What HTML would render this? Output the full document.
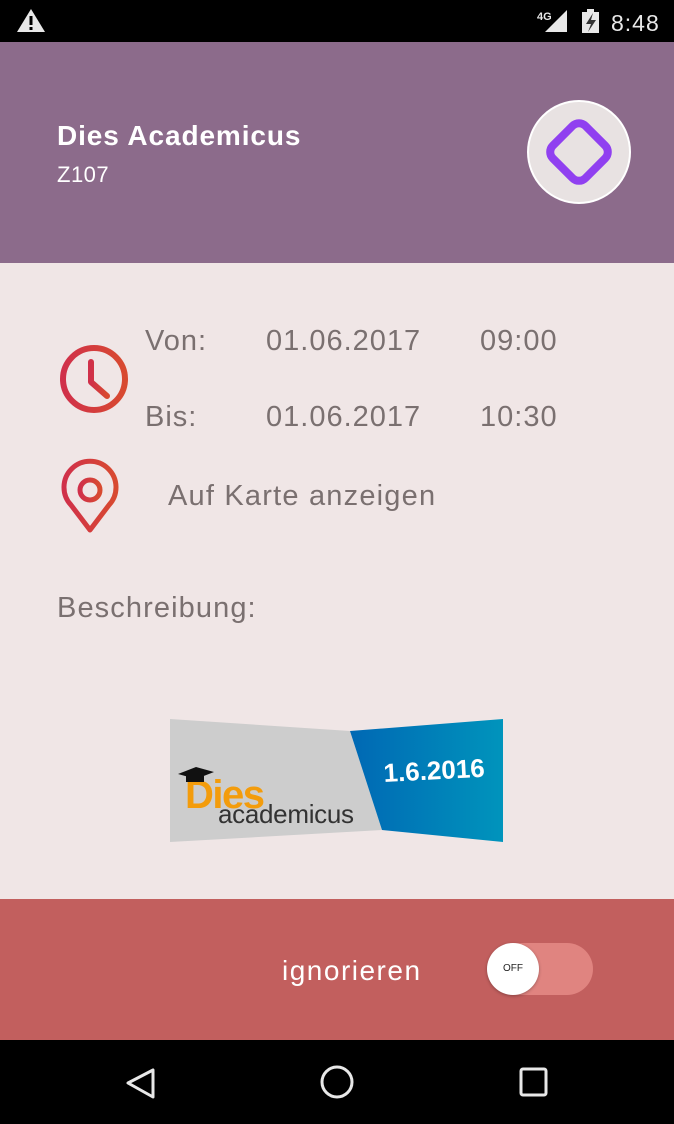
<!DOCTYPE html>
<html><head><meta charset="utf-8">
<style>
*{margin:0;padding:0;box-sizing:border-box}
body{width:674px;height:1124px;overflow:hidden;background:#f0e6e6;font-family:"Liberation Sans",Roboto,sans-serif;position:relative}
.abs{position:absolute}
.t{color:#7a7070;font-size:29px;position:absolute;white-space:nowrap;letter-spacing:1px}
</style></head><body>
<div class="abs" style="left:0;top:0;width:674px;height:42px;background:#000"></div>
<svg class="abs" style="left:0;top:0" width="674" height="42">
<path d="M31 9 L45 32 L17 32 Z" fill="#e8e8e8"/>
<rect x="29.5" y="16" width="3" height="9" fill="#000"/><rect x="29.5" y="27" width="3" height="3" fill="#000"/>
<text x="537" y="20" fill="#e8e8e8" font-size="11" font-weight="bold" font-family="Liberation Sans">4G</text>
<path d="M567 10 L567 32 L545 32 Z" fill="#e8e8e8"/>
<rect x="582" y="12" width="17" height="21" fill="#e8e8e8"/><rect x="587" y="9" width="7" height="4" fill="#e8e8e8"/>
<path d="M593 13 L586 24 L591 24 L588 32 L596 20 L591 20 Z" fill="#333"/>
<text x="611" y="31" fill="#e8e8e8" font-size="23" letter-spacing="1" font-family="Liberation Sans">8:48</text>
</svg>
<div class="abs" style="left:0;top:42px;width:674px;height:221px;background:#8c6b8b"></div>
<div class="abs" style="left:57px;top:120px;color:#fff;font-size:28px;font-weight:bold;letter-spacing:0.9px">Dies Academicus</div>
<div class="abs" style="left:57px;top:162px;color:#fff;font-size:22px;letter-spacing:0.5px">Z107</div>
<svg class="abs" style="left:520px;top:93px" width="120" height="120">
<circle cx="59" cy="59" r="51" fill="#e8e2e2" stroke="#fff" stroke-width="2"/>
<rect x="36" y="36" width="46" height="46" rx="9" transform="rotate(45 59 59)" fill="none" stroke="#9040f0" stroke-width="8"/>
</svg>
<svg class="abs" style="left:55px;top:340px" width="80" height="200">
<defs><linearGradient id="g" x1="0" x2="1"><stop offset="0" stop-color="#d0304a"/><stop offset="1" stop-color="#d84a30"/></linearGradient></defs>
<circle cx="39" cy="39" r="31" fill="none" stroke="url(#g)" stroke-width="6"/>
<path d="M36 22 L36 42 L52 56" fill="none" stroke="url(#g)" stroke-width="6" stroke-linecap="round" stroke-linejoin="round"/>
<path d="M35 190 L16 165 A26 26 0 1 1 54 165 Z" fill="none" stroke="url(#g)" stroke-width="5" stroke-linejoin="round"/>
<circle cx="35" cy="150" r="10" fill="none" stroke="url(#g)" stroke-width="5"/>
</svg>
<div class="t" style="left:145px;top:325px">Von:</div>
<div class="t" style="left:266px;top:325px">01.06.2017</div>
<div class="t" style="left:480px;top:325px">09:00</div>
<div class="t" style="left:145px;top:401px">Bis:</div>
<div class="t" style="left:266px;top:401px">01.06.2017</div>
<div class="t" style="left:480px;top:401px">10:30</div>
<div class="t" style="left:168px;top:480px;letter-spacing:1.2px">Auf Karte anzeigen</div>
<div class="t" style="left:57px;top:592px;letter-spacing:1.1px">Beschreibung:</div>
<svg class="abs" style="left:0;top:0" width="674" height="900">
<defs><linearGradient id="b" x1="0" x2="1"><stop offset="0" stop-color="#0068b4"/><stop offset="1" stop-color="#0094bc"/></linearGradient></defs>
<path d="M170 719 L350 731 L382 830 L170 842 Z" fill="#cdcdcd"/>
<path d="M350 731 L503 719 L503 842 L382 830 Z" fill="url(#b)"/>
<text x="384" y="782" fill="#fff" font-size="26" font-weight="bold" font-family="Liberation Sans" transform="rotate(-3 384 782)">1.6.2016</text>
<text x="185" y="808" fill="#f39c0c" font-size="40" font-weight="bold" letter-spacing="-1.5" font-family="Liberation Sans">Dies</text>
<text x="218" y="823" fill="#333" font-size="26" letter-spacing="-0.3" font-family="Liberation Sans">academicus</text>
<path d="M178 774 L196 767 L214 772 L196 779 Z" fill="#111"/><rect x="186" y="776" width="18" height="6" fill="#111"/>
</svg>
<div class="abs" style="left:0;top:899px;width:674px;height:141px;background:#c25f5e"></div>
<div class="abs" style="left:282px;top:955px;color:#fff;font-size:28px;letter-spacing:1.5px">ignorieren</div>
<div class="abs" style="left:488px;top:943px;width:105px;height:52px;border-radius:26px;background:#e08480"></div>
<div class="abs" style="left:487px;top:943px;width:52px;height:52px;border-radius:50%;background:#fff;box-shadow:0 1px 3px rgba(0,0,0,.3);font-size:10px;color:#222;text-align:center;line-height:52px">OFF</div>
<div class="abs" style="left:0;top:1040px;width:674px;height:84px;background:#000"></div>
<svg class="abs" style="left:0;top:1040px" width="674" height="84">
<path d="M153 30 L153 57 L128 43 Z" fill="none" stroke="#e8e8e8" stroke-width="3" stroke-linejoin="round"/>
<ellipse cx="337" cy="42" rx="15" ry="15" fill="none" stroke="#e8e8e8" stroke-width="3"/>
<rect x="521" y="29" width="25" height="26" rx="2" fill="none" stroke="#e8e8e8" stroke-width="3"/>
</svg>
</body></html>
